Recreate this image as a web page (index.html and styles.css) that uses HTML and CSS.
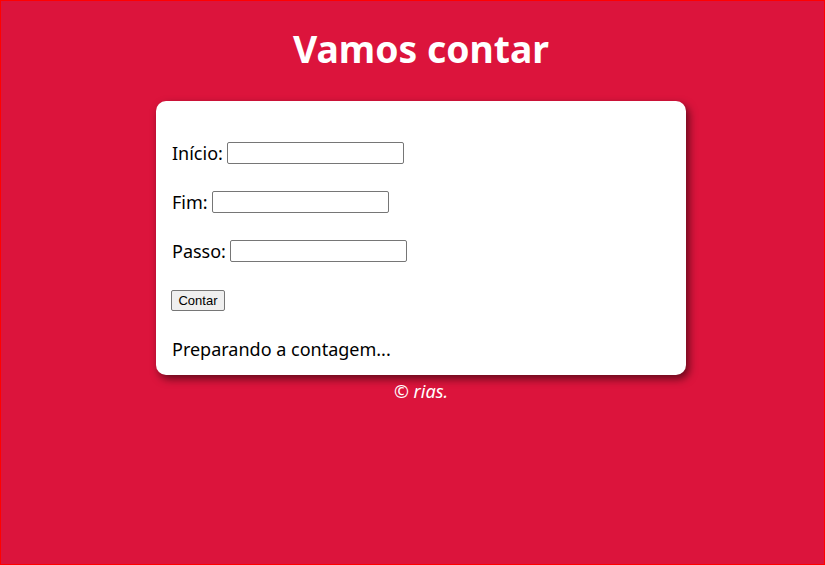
FILE: index.html
```html
<!DOCTYPE html>
<html lang="pt-BR">
<head>
<meta charset="utf-8">
<title>Vamos contar</title>
<link rel="stylesheet" href="styles.css">
</head>
<body>
<header class="top">
  <h1 class="title">Vamos contar</h1>
</header>
<main class="card">
  <div class="row"><label for="inicio">Início:</label><input type="number" id="inicio" class="field"></div>
  <div class="row"><label for="fim">Fim:</label><input type="number" id="fim" class="field"></div>
  <div class="row"><label for="passo">Passo:</label><input type="number" id="passo" class="field"></div>
  <div class="row"><button class="btn" type="button">Contar</button></div>
  <div class="row result">Preparando a contagem...</div>
</main>
<footer class="foot">&copy; rias.</footer>
</body>
</html>
```
FILE: styles.css
```css
html, body {
  margin: 0;
  padding: 0;
}
body {
  background: #dc143c;
  border: 1px solid #ff0000;
  box-sizing: border-box;
  min-height: 100vh;
  font-family: "Noto Sans", "Open Sans", sans-serif;
  color: #000;
  padding-left: 17px;
}
.top {
  text-align: center;
  color: #fff;
  padding-top: 25px;
}
.title {
  margin: 0;
  font-size: 37.3px;
  line-height: 46px;
  font-weight: bold;
}
.card {
  width: 530px;
  box-sizing: border-box;
  margin: 29px auto 0;
  background: #fff;
  border-radius: 10px;
  box-shadow: 3px 4px 8px rgba(0, 0, 0, 0.55);
  padding: 39px 16px 13px;
  display: flex;
  flex-direction: column;
  gap: 23px;
}
.row {
  height: 26px;
  line-height: 26px;
  font-size: 18px;
  display: flex;
  align-items: center;
  white-space: pre;
}
.field {
  width: 177px;
  height: 22px;
  margin-left: 4px;
  box-sizing: border-box;
  border: 1px solid #767676;
  border-radius: 2px;
  padding: 1px 2px;
  font-family: "Liberation Sans", Arial, sans-serif;
  font-size: 13.33px;
  background: #fff;
  -moz-appearance: textfield;
}
.field::-webkit-inner-spin-button,
.field::-webkit-outer-spin-button {
  -webkit-appearance: none;
  margin: 0;
}
.btn {
  height: 21px;
  width: 54px;
  padding: 0;
  margin-left: -1px;
  font-family: "Liberation Sans", Arial, sans-serif;
  font-size: 13px;
  background: #efefef;
  border: 1px solid #767676;
  border-radius: 2px;
  color: #000;
}
.foot {
  text-align: center;
  color: #fff;
  font-style: italic;
  font-size: 18px;
  line-height: 26px;
  padding-top: 3px;
}
```
